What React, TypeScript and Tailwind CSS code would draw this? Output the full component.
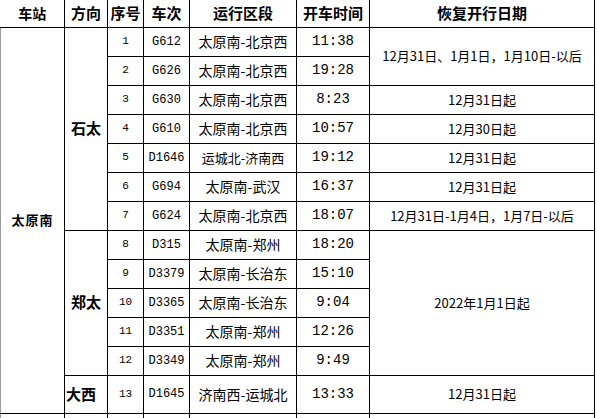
import React from 'react';

interface TrainRow {
  no: number;
  train: string;
  route: string;
  time: string;
  dir?: string;
  dirSpan?: number;
  date?: string;
  dateSpan?: number;
  small?: boolean;
}

const rows: TrainRow[] = [
  { no: 1, train: 'G612', route: '太原南-北京西', time: '11:38', dir: '石太', dirSpan: 7, date: '12月31日、1月1日，1月10日-以后', dateSpan: 2 },
  { no: 2, train: 'G626', route: '太原南-北京西', time: '19:28' },
  { no: 3, train: 'G630', route: '太原南-北京西', time: '8:23', date: '12月31日起' },
  { no: 4, train: 'G610', route: '太原南-北京西', time: '10:57', date: '12月30日起' },
  { no: 5, train: 'D1646', route: '运城北-济南西', time: '19:12', date: '12月31日起', small: true },
  { no: 6, train: 'G694', route: '太原南-武汉', time: '16:37', date: '12月31日起' },
  { no: 7, train: 'G624', route: '太原南-北京西', time: '18:07', date: '12月31日-1月4日，1月7日-以后' },
  { no: 8, train: 'D315', route: '太原南-郑州', time: '18:20', dir: '郑太', dirSpan: 5, date: '2022年1月1日起', dateSpan: 5 },
  { no: 9, train: 'D3379', route: '太原南-长治东', time: '15:10' },
  { no: 10, train: 'D3365', route: '太原南-长治东', time: '9:04' },
  { no: 11, train: 'D3351', route: '太原南-郑州', time: '12:26' },
  { no: 12, train: 'D3349', route: '太原南-郑州', time: '9:49' },
  { no: 13, train: 'D1645', route: '济南西-运城北', time: '13:33', dir: '大西', dirSpan: 1, date: '12月31日起' },
];

const cjk = "font-['Noto_Sans_CJK_SC',sans-serif]";
const mono = "font-['Liberation_Mono','Noto_Sans_CJK_SC',monospace]";
const cell = 'border border-black p-0 text-center align-middle';

export default function App() {
  return (
    <div className="w-[597px] h-[418px] overflow-hidden bg-white text-black">
      <table className="table-fixed border-collapse w-[594px]">
        <colgroup>
          <col className="w-[64px]" />
          <col className="w-[43px]" />
          <col className="w-[36px]" />
          <col className="w-[46px]" />
          <col className="w-[107px]" />
          <col className="w-[73px]" />
          <col className="w-[225px]" />
        </colgroup>
        <thead>
          <tr className={`h-[27px] ${cjk} text-[15px] font-bold`}>
            <th className={`${cell} border-t-0 border-l-0 text-[14px]`}>车站</th>
            <th className={`${cell} border-t-0`}>方向</th>
            <th className={`${cell} border-t-0`}>序号</th>
            <th className={`${cell} border-t-0`}>车次</th>
            <th className={`${cell} border-t-0`}>运行区段</th>
            <th className={`${cell} border-t-0`}>开车时间</th>
            <th className={`${cell} border-t-0`}>恢复开行日期</th>
          </tr>
        </thead>
        <tbody>
          {rows.map((r, i) => (
            <tr key={r.no} className={i === rows.length - 1 ? 'h-[38px]' : 'h-[29px]'}>
              {i === 0 && (
                <td rowSpan={13} className={`${cell} border-l-[#9a9a9a] ${cjk} text-[13px] font-bold tracking-[1px]`}>
                  太原南
                </td>
              )}
              {r.dir && (
                <td
                  rowSpan={r.dirSpan}
                  className={`${cell} ${cjk} text-[15px] font-bold ${r.dirSpan === 1 ? 'pr-[10px]' : ''}`}
                >
                  {r.dir}
                </td>
              )}
              <td className={`${cell} ${mono} text-[11px]`}>{r.no}</td>
              <td className={`${cell} ${mono} text-[12px]`}>{r.train}</td>
              <td className={`${cell} ${cjk} ${r.small ? 'text-[13px]' : 'text-[14px]'}`}>{r.route}</td>
              <td className={`${cell} ${mono} text-[14px]`}>{r.time}</td>
              {r.date && (
                <td rowSpan={r.dateSpan} className={`${cell} ${cjk} text-[13px]`}>
                  {r.date}
                </td>
              )}
            </tr>
          ))}
          <tr className="h-[12px]">
            <td className={`${cell} border-b-0 border-l-[#9a9a9a]`} />
            <td className={`${cell} border-b-0`} />
            <td className={`${cell} border-b-0`} />
            <td className={`${cell} border-b-0`} />
            <td className={`${cell} border-b-0`} />
            <td className={`${cell} border-b-0`} />
            <td className={`${cell} border-b-0`} />
          </tr>
        </tbody>
      </table>
    </div>
  );
}
